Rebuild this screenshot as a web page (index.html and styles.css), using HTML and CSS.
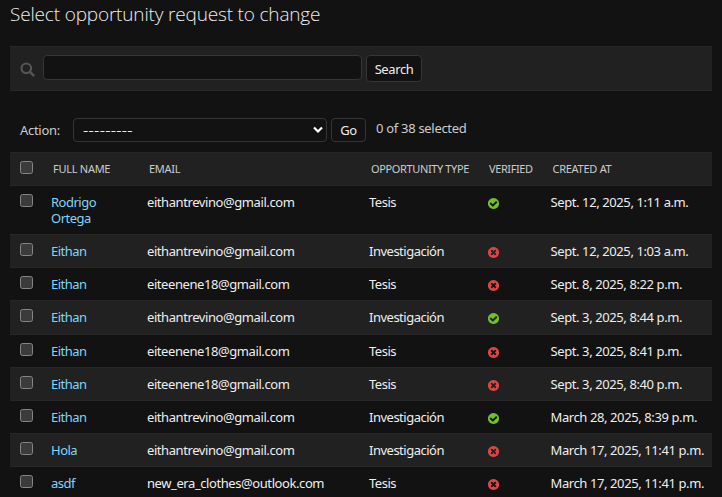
FILE: index.html
```html
<!DOCTYPE html>
<html lang="en">
<head>
<meta charset="utf-8">
<title>Select opportunity request to change</title>
<link rel="stylesheet" href="styles.css">
</head>
<body>
<svg class="defs" aria-hidden="true">
  <symbol id="yes" viewBox="0 0 1792 1792"><path fill="#70bf2b" d="M1412 734q0-28-18-46l-91-90q-19-19-45-19t-45 19l-408 407-226-226q-19-19-45-19t-45 19l-91 90q-18 18-18 46 0 27 18 45l362 362q19 19 45 19 27 0 46-19l543-543q18-18 18-45zm252 162q0 209-103 385.500t-279.500 279.500-385.500 103-385.500-103-279.500-279.500-103-385.500 103-385.500 279.500-279.500 385.500-103 385.500 103 279.500 279.500 103 385.500z"/></symbol>
  <symbol id="no" viewBox="0 0 1792 1792"><path fill="#dd4646" d="M1277 1122q0-26-19-45l-181-181 181-181q19-19 19-45 0-27-19-46l-90-90q-19-19-46-19-26 0-45 19l-181 181-181-181q-19-19-45-19-27 0-46 19l-90 90q-19 19-19 46 0 26 19 45l181 181-181 181q-19 19-19 45 0 27 19 46l90 90q19 19 46 19 26 0 45-19l181-181 181 181q19 19 45 19 27 0 46-19l90-90q19-19 19-46zm387-226q0 209-103 385.500t-279.500 279.500-385.500 103-385.500-103-279.500-279.500-103-385.500 103-385.500 279.500-279.500 385.500-103 385.500 103 279.500 279.500 103 385.500z"/></symbol>
</svg>
<main class="content">
  <h1>Select opportunity request to change</h1>
  <form class="toolbar">
    <svg class="search-icon" viewBox="0 0 15 15"><circle cx="6.300" cy="6.300" r="4.800" fill="none" stroke="#555" stroke-width="2.200"/><path d="M9.900 9.900l3.500 3.500" stroke="#555" stroke-width="2.600" stroke-linecap="round"/></svg>
    <input class="searchbar" type="text" aria-label="Search">
    <button class="button search-button" type="button">Search</button>
  </form>
  <div class="actions">
    <span class="action-label">Action:</span>
    <div class="select"><span>---------</span><svg viewBox="0 0 10 8"><path d="M1 1.500l4 4 4-4" fill="none" stroke="#fff" stroke-width="2.200"/></svg></div>
    <button class="button go" type="button">Go</button>
    <span class="counter">0 of 38 selected</span>
  </div>
  <div class="results">
    <div class="row head"><input type="checkbox"><span>FULL NAME</span><span>EMAIL</span><span class="h-type">OPPORTUNITY TYPE</span><span class="h-verified">VERIFIED</span><span>CREATED AT</span></div>
    <div class="row tall"><input type="checkbox"><a>Rodrigo<br>Ortega</a><span class="mail">eithantrevino@gmail.com</span><span class="type">Tesis</span><svg><use href="#yes"/></svg><span class="date">Sept. 12, 2025, 1:11 a.m.</span></div>
    <div class="row alt"><input type="checkbox"><a>Eithan</a><span class="mail">eithantrevino@gmail.com</span><span class="type">Investigación</span><svg><use href="#no"/></svg><span class="date">Sept. 12, 2025, 1:03 a.m.</span></div>
    <div class="row"><input type="checkbox"><a>Eithan</a><span class="mail">eiteenene18@gmail.com</span><span class="type">Tesis</span><svg><use href="#no"/></svg><span class="date">Sept. 8, 2025, 8:22 p.m.</span></div>
    <div class="row alt"><input type="checkbox"><a>Eithan</a><span class="mail">eithantrevino@gmail.com</span><span class="type">Investigación</span><svg><use href="#yes"/></svg><span class="date">Sept. 3, 2025, 8:44 p.m.</span></div>
    <div class="row"><input type="checkbox"><a>Eithan</a><span class="mail">eiteenene18@gmail.com</span><span class="type">Tesis</span><svg><use href="#no"/></svg><span class="date">Sept. 3, 2025, 8:41 p.m.</span></div>
    <div class="row alt"><input type="checkbox"><a>Eithan</a><span class="mail">eiteenene18@gmail.com</span><span class="type">Tesis</span><svg><use href="#no"/></svg><span class="date">Sept. 3, 2025, 8:40 p.m.</span></div>
    <div class="row"><input type="checkbox"><a>Eithan</a><span class="mail">eithantrevino@gmail.com</span><span class="type">Investigación</span><svg><use href="#yes"/></svg><span class="date">March 28, 2025, 8:39 p.m.</span></div>
    <div class="row alt"><input type="checkbox"><a>Hola</a><span class="mail">eithantrevino@gmail.com</span><span class="type">Investigación</span><svg><use href="#no"/></svg><span class="date">March 17, 2025, 11:41 p.m.</span></div>
    <div class="row"><input type="checkbox"><a>asdf</a><span class="mail">new_era_clothes@outlook.com</span><span class="type">Tesis</span><svg><use href="#no"/></svg><span class="date">March 17, 2025, 11:41 p.m.</span></div>
  </div>
</main>
</body>
</html>
```
FILE: styles.css
```css
* { box-sizing: border-box; }
body {
  margin: 0;
  height: 497px;
  overflow: hidden;
  background: #121212;
  color: #eee;
  font: 13px/16px "Noto Sans", "Open Sans", sans-serif;
  letter-spacing: -0.3px;
}
.defs { display: none; }
.content { padding: 0 10px; }
h1 {
  margin: 0;
  height: 46px;
  padding-top: 2px;
  font: 300 19px/24px "Open Sans", "Noto Sans", sans-serif;
  letter-spacing: -0.170px;
  white-space: nowrap;
}
.toolbar {
  display: flex;
  align-items: flex-start;
  height: 45px;
  padding: 8px 10px;
  background: #212121;
  border: solid #272727;
  border-width: 1px 0;
}
.search-icon { width: 15px; height: 15px; margin: 7px 8px 0 0; }
.searchbar {
  width: 319px;
  height: 25px;
  margin: 0 4px 0 0;
  background: #121212;
  border: 1px solid #353535;
  border-radius: 4px;
}
.button {
  height: 27px;
  padding: 0;
  background: #121212;
  color: #eee;
  border: 1px solid #353535;
  border-radius: 4px;
  font: inherit;
  letter-spacing: inherit;
}
.search-button { width: 56px; letter-spacing: -0.400px; }
.actions {
  display: flex;
  align-items: flex-start;
  height: 61px;
  padding: 27px 10px 0;
  color: #ccc;
}
.action-label { width: 53px; padding-top: 4px; }
.select {
  display: flex;
  align-items: center;
  justify-content: space-between;
  width: 254px;
  height: 24px;
  margin-right: 4px;
  padding: 0 3px 0 9px;
  color: #eee;
  border: 1px solid #353535;
  border-radius: 4px;
}
.select span { letter-spacing: 0.250px; transform: scaleX(1.250); transform-origin: left; }
.select svg { width: 10px; height: 8px; }
.go { width: 35px; height: 24px; margin-right: 10px; }
.counter { padding-top: 2px; }
.row {
  display: grid;
  grid-template-columns: 31px 96px 222px 119px 62.500px 1fr;
  align-items: start;
  height: 33.140px;
  padding: 8px 0 0 10px;
  border-top: 1px solid #272727;
  white-space: nowrap;
}
.tall { height: 49.200px; }
.head, .alt { background: #212121; }
.head {
  height: 33px;
  color: #ccc;
  font-size: 11px;
  letter-spacing: -0.270px;
}
.head span { padding-left: 2px; }
.head .h-type { letter-spacing: -0.370px; }
.head .h-verified { padding-left: 1px; letter-spacing: -0.400px; }
.row input {
  appearance: none;
  width: 13px;
  height: 13px;
  margin: 0;
  background: #3b3b3b;
  border: 1px solid #858585;
  border-radius: 2.500px;
}
a { color: #81d4fa; letter-spacing: -0.500px; }
.mail { letter-spacing: -0.420px; }
.type { letter-spacing: -0.500px; }
.date { letter-spacing: -0.400px; }
.row svg { width: 13px; height: 13px; margin: 3px 0 0 -1px; }
```
